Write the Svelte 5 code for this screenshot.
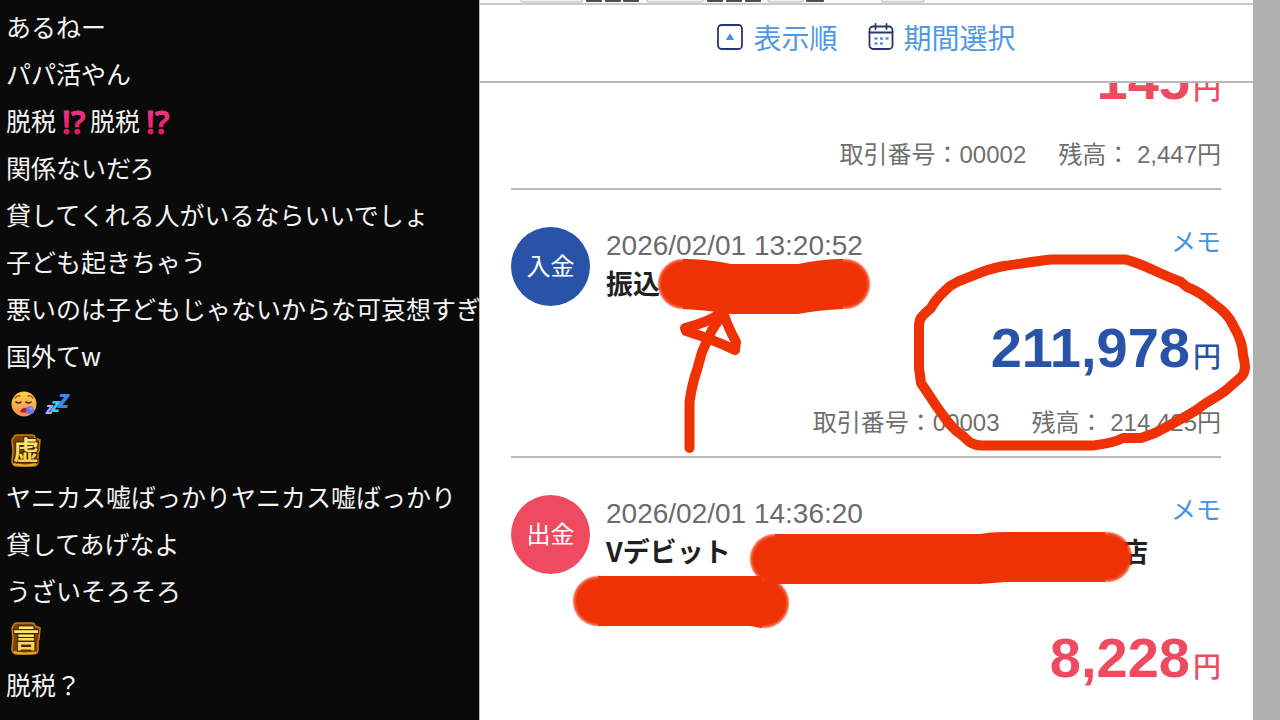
<script>
  const messages = [
    [{ text: 'あるねー' }],
    [{ text: 'パパ活やん' }],
    [{ text: '脱税' }, { icon: 'interrobang' }, { text: '脱税' }, { icon: 'interrobang' }],
    [{ text: '関係ないだろ' }],
    [{ text: '貸してくれる人がいるならいいでしょ' }],
    [{ text: '子ども起きちゃう' }],
    [{ text: '悪いのは子どもじゃないからな可哀想すぎ' }],
    [{ text: '国外てw' }],
    [{ icon: 'sleepy' }, { icon: 'zzz' }],
    [{ icon: 'tile', text: '虚' }],
    [{ text: 'ヤニカス嘘ばっかりヤニカス嘘ばっかり' }],
    [{ text: '貸してあげなよ' }],
    [{ text: 'うざいそろそろ' }],
    [{ icon: 'tile', text: '言' }],
    [{ text: '脱税？' }]
  ];

  const entries = [
    { kind: 'out', amount: '145', number: '00002', balance: '2,447' },
    { kind: 'in', label: '入金', date: '2026/02/01 13:20:52', title: '振込', amount: '211,978', number: '00003', balance: '214,425' },
    { kind: 'out', label: '出金', date: '2026/02/01 14:36:20', title: 'Vデビット', shop: '店', amount: '8,228' }
  ];

  const tabs = [
    [41, 61, false], [106, 16, true], [125, 16, true], [143, 16, true],
    [167, 56, false], [227, 16, true], [246, 16, true], [265, 16, true],
    [288, 35, false], [326, 18, true], [402, 42, false]
  ];
</script>

<main class="screen">
  <ul class="chat">
    {#each messages as parts}
      <li class="message">
        {#each parts as part}
          {#if part.icon === 'interrobang'}
            <svg class="mark" viewBox="0 0 34 32" role="img" aria-label="⁉">
              <defs>
                <linearGradient id="pink" x1="0" y1="0" x2="0" y2="1">
                  <stop offset="0" stop-color="#ee3f9c" />
                  <stop offset="1" stop-color="#e5124a" />
                </linearGradient>
              </defs>
              <text x="6" y="29" fill="url(#pink)" stroke="url(#pink)">!</text>
              <text x="15" y="29" fill="url(#pink)" stroke="url(#pink)">?</text>
            </svg>
          {:else if part.icon === 'sleepy'}
            <svg class="emote" viewBox="0 0 34 34" role="img" aria-label="眠い顔">
              <defs>
                <linearGradient id="skin" x1="0" y1="0" x2="0" y2="1">
                  <stop offset="0" stop-color="#ffd34e" />
                  <stop offset="1" stop-color="#f58c4a" />
                </linearGradient>
              </defs>
              <circle cx="18" cy="18" r="12.500" fill="url(#skin)" />
              <path d="M9 12q3-3 5-2M22 10q3-1 5 2" fill="none" stroke="#a85a1c" stroke-width="1.400" stroke-linecap="round" />
              <path d="M10 16q3 2 5 0M20 16q3 2 5 0" fill="none" stroke="#4a2418" stroke-width="1.600" stroke-linecap="round" />
              <path d="M14 26q2-5 7-4l1 4q-4 1-8 0z" fill="#b81646" />
              <path d="M20 23q1-3 4-3t4 4-4 4-4-3z" fill="#6f76ec" />
              <circle cx="25" cy="22.500" r="1.500" fill="#8fa1ff" />
            </svg>
          {:else if part.icon === 'zzz'}
            <svg class="emote" viewBox="0 0 34 34" role="img" aria-label="💤">
              <g class="zzz">
                <text x="6" y="28" font-size="12" fill="#b6a9fb">Z</text>
                <text x="11" y="26" font-size="16" fill="#40c8f2">Z</text>
                <text x="18" y="22" font-size="20" fill="#3f86e8">Z</text>
              </g>
            </svg>
          {:else if part.icon === 'tile'}
            <svg class="tile" viewBox="0 0 38 38" role="img" aria-label={part.text}>
              <defs>
                <linearGradient id="gold" x1="0" y1="0" x2="0" y2="1">
                  <stop offset="0" stop-color="#fff38a" />
                  <stop offset="1" stop-color="#f5cb3c" />
                </linearGradient>
              </defs>
              <path d="M8 6q0-2 3-2h15q3 0 3 3l5 2-1 11-1 2v9q0 4-5 4H10q-4-1-4-5l1-10-1-11z" fill="#7a4207" stroke="#c97d16" stroke-width="1.500" />
              <path d="M8 33q11 3 22 0" fill="none" stroke="#e9ad2c" stroke-width="2" />
              <text x="20" y="29" fill="url(#gold)">{part.text}</text>
            </svg>
          {:else}
            <span>{part.text}</span>
          {/if}
        {/each}
      </li>
    {/each}
  </ul>

  <div class="viewer">
    <section class="statement">
      <svg class="strip" viewBox="0 0 773 5" preserveAspectRatio="xMinYMin slice" aria-hidden="true">
        {#each tabs as [x, width, dark]}
          <rect {x} y="-6" {width} height="8" rx="1" fill={dark ? '#4e4e50' : '#f1f1f1'} stroke={dark ? 'none' : '#b5b5b5'} />
        {/each}
      </svg>

      <header class="tools">
        <button class="tool" type="button">
          <svg class="tool-icon" viewBox="0 0 26 28" aria-hidden="true">
            <rect x="1" y="2" width="24" height="24" rx="3.500" fill="none" stroke="#28366f" stroke-width="1.800" />
            <path d="M13 11l3.500 5.500h-7z" fill="#4b8fe6" stroke="#4b8fe6" stroke-linejoin="round" />
          </svg>
          表示順
        </button>
        <button class="tool" type="button">
          <svg class="tool-icon" viewBox="0 0 26 28" aria-hidden="true">
            <rect x="1.500" y="3.500" width="23" height="22.500" rx="3.500" fill="none" stroke="#28366f" stroke-width="1.800" />
            <path d="M1.500 9.500h23M7.500 1v5M18.500 1v5" fill="none" stroke="#28366f" stroke-width="1.800" stroke-linecap="round" />
            <path d="M6.500 15.500h3m2.500 0h3m2.500 0h3M6.500 20.500h3m2.500 0h3" fill="none" stroke="#4b8fe6" stroke-width="2.600" />
          </svg>
          期間選択
        </button>
      </header>

      <div class="list">
        {#each entries as entry}
          <article class="entry {entry.kind}" class:scrolled={!entry.date}>
            {#if entry.date}
              <div class="top" class:tall={entry.shop}>
                <span class="badge">{entry.label}</span>
                <div class="heading">
                  <time class="date">{entry.date}</time>
                  <h2 class="title">
                    {entry.title}
                    {#if entry.shop}<span class="shop">{entry.shop}</span>{/if}
                  </h2>
                </div>
                <a class="memo" href="#memo">メモ</a>
              </div>
            {/if}
            <p class="amount">{entry.amount}<span class="yen">円</span></p>
            {#if entry.number}
              <p class="meta">
                <span>取引番号：{entry.number}</span>
                <span>残高： {entry.balance}円</span>
              </p>
            {/if}
          </article>
        {/each}
      </div>

      <svg class="marker" viewBox="480 0 773 720" aria-hidden="true">
        <defs>
          <radialGradient id="soft">
            <stop offset="0.820" stop-color="#ee3206" />
            <stop offset="0.920" stop-color="#ee3206" stop-opacity="0.750" />
            <stop offset="1" stop-color="#ee3206" stop-opacity="0" />
          </radialGradient>
        </defs>
        <g fill="url(#soft)">
          <circle cx="683" cy="284" r="26" />
          <circle cx="845" cy="284" r="26" />
          <circle cx="775" cy="559" r="26" />
          <circle cx="1107" cy="557" r="26" />
          <circle cx="598" cy="601" r="26" />
          <circle cx="764" cy="603" r="26" />
        </g>
        <g fill="#ee3206">
          <path d="M683 259q25 0 48 5h67q25-5 45-5v50q-25 1-45 5h-67q-25-4-48-5z" />
          <path d="M775 534h205q10-2 25-2h100v50h-100l-25 2H775z" />
          <path d="M598 576h164v52l-12-2H598z" />
        </g>
        <g fill="none" stroke="#ee3206" stroke-width="10" stroke-linecap="round" stroke-linejoin="round">
          <path d="M689.500 448V402Q692 384 697 370L702 352L712 330L722 315M720 314Q706 323 685 328L686 331Q712 339 735 350L736 342Q728 327 724 315" />
          <path d="M1125 259.500C1136 261 1156 272 1181 282L1187 287C1198 291 1206 297 1214 304C1224 311 1230 318 1233 325C1240 337 1243 346 1243 355C1246 366 1246 373 1240 378L1225 391C1214 399 1206 402 1198 409C1184 418 1170 425 1155 433L1141 438L1123 438C1114 443 1104 444 1093 445.500H984C974 446 970 443 963 436C950 428 944 416 937 407L921 383L919 368V326C919 318 922 316 931 308C936 298 944 292 950 286L959 281C973 276 985 269 1004 266C1020 264 1035 261 1052 259.500Z" />
        </g>
      </svg>
    </section>
    <div class="gutter"></div>
  </div>
</main>

<style>
  :global(body) {
    margin: 0;
  }

  .screen {
    display: grid;
    grid-template-columns: 3fr 5fr;
    height: 100vh;
    overflow: hidden;
    font-family: "Liberation Sans", "Noto Sans CJK JP", sans-serif;
  }

  .chat {
    min-width: 0;
    margin: 0;
    padding: 3px 0 0 6px;
    overflow: hidden;
    list-style: none;
    background: #0a0a0a;
    border-right: 1px solid #b8b8b8;
    color: #f4f4f4;
    font: 25px/47px "Noto Sans CJK JP", sans-serif;
  }

  .message {
    display: flex;
    align-items: center;
    height: 47px;
    white-space: nowrap;
  }

  .mark {
    width: 34px;
    height: 32px;
    overflow: visible;
  }

  .mark text {
    font: 600 32px/32px "Open Sans", sans-serif;
    stroke-width: 1;
    stroke-linejoin: round;
  }

  .emote {
    width: 34px;
    height: 34px;
    overflow: visible;
  }

  .zzz {
    font-family: "Open Sans", sans-serif;
    font-weight: 800;
    font-style: italic;
  }

  .tile {
    width: 38px;
    height: 38px;
    overflow: visible;
  }

  .tile text {
    font: 700 26px "Noto Sans CJK JP", sans-serif;
    text-anchor: middle;
    stroke: #3d1e02;
    stroke-width: 2;
    paint-order: stroke;
  }

  .viewer {
    display: flex;
    min-width: 0;
  }

  .gutter {
    flex: 0 0 27px;
    background: #b0b0b0;
  }

  .statement {
    position: relative;
    display: flex;
    flex: 1;
    flex-direction: column;
    min-width: 0;
    overflow: hidden;
    background: #fff;
  }

  .strip {
    flex: none;
    box-sizing: border-box;
    width: 100%;
    height: 5px;
    background: #fafafa;
    border-bottom: 2px solid #c9c9c9;
  }

  .tools {
    display: flex;
    flex: none;
    justify-content: center;
    gap: 30px;
    padding: 12px 0 24px;
    border-bottom: 2px solid #b9b9b9;
  }

  .tool {
    display: flex;
    align-items: center;
    gap: 10px;
    padding: 0;
    border: 0;
    background: none;
    color: #4e98e4;
    font: 400 28px/40px "Noto Sans CJK JP", sans-serif;
    cursor: pointer;
  }

  .tool-icon {
    width: 26px;
    height: 28px;
  }

  .list {
    flex: 1;
    min-height: 0;
    padding: 0 32px 0 31px;
    overflow: hidden;
  }

  .entry {
    padding: 37px 0 15px;
    border-bottom: 2px solid #b9b9b9;
  }

  .entry.scrolled {
    margin-top: -39px;
    padding-top: 0;
  }

  .entry:last-child {
    border-bottom: 0;
  }

  .top {
    display: flex;
    align-items: flex-start;
    gap: 16px;
    height: 85px;
  }

  .top.tall {
    height: 127px;
  }

  .badge {
    display: grid;
    flex: none;
    box-sizing: border-box;
    place-items: center;
    width: 79px;
    height: 79px;
    padding-bottom: 4px;
    border-radius: 50%;
    color: #fff;
    font: 24px/24px "Noto Sans CJK JP", sans-serif;
  }

  .in .badge {
    background: #2853a8;
  }

  .out .badge {
    background: #ee4a60;
  }

  .heading {
    flex: 1;
    min-width: 0;
  }

  .date {
    display: block;
    color: #6b6b6b;
    font-size: 28px;
    line-height: 38px;
  }

  .title {
    display: flex;
    margin: 0;
    color: #1f1f1f;
    font: 700 27px/36px "Noto Sans CJK JP", sans-serif;
  }

  .shop {
    margin-left: auto;
    margin-right: 7px;
  }

  .memo {
    color: #4793e0;
    font: 25px/26px "Noto Sans CJK JP", sans-serif;
    text-decoration: none;
  }

  .amount {
    display: flex;
    align-items: baseline;
    justify-content: flex-end;
    gap: 3px;
    margin: 0;
    height: 72px;
    font-weight: 700;
    font-size: 56px;
    line-height: 72px;
  }

  .yen {
    font: 500 28px/40px "Noto Sans CJK JP", sans-serif;
  }

  .in .amount {
    color: #2853a8;
  }

  .out .amount {
    color: #ee4a60;
  }

  .meta {
    display: flex;
    justify-content: flex-end;
    gap: 32px;
    margin: 21px 0 0;
    color: #6f6f6f;
    font-size: 24px;
    line-height: 36px;
    white-space: pre;
  }

  .marker {
    position: absolute;
    top: 0;
    left: 0;
    width: 100%;
    pointer-events: none;
  }
</style>
